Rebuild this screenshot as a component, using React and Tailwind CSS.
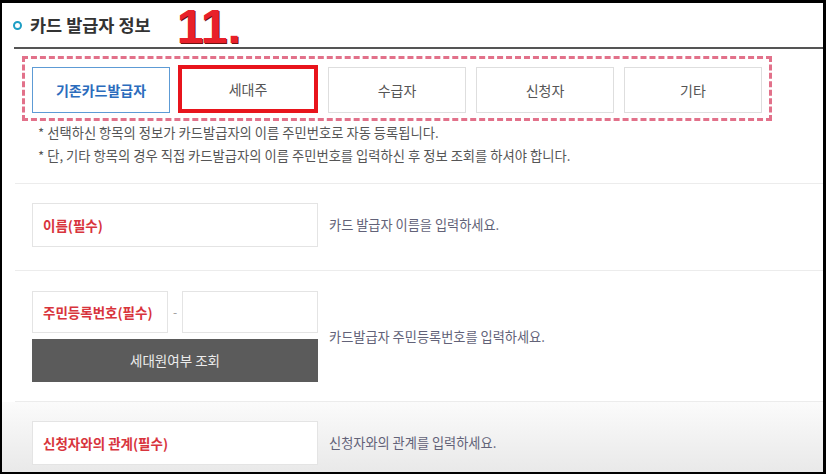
import { useState } from 'react';

const TYPES = ['기존카드발급자', '세대주', '수급자', '신청자', '기타'];

const FONT = "font-['Noto_Sans_CJK_KR','Noto_Sans',sans-serif]";

function TypeButton({ label, index }) {
  if (index === 0) {
    return (
      <div className="w-[138px] h-[46px] mr-[-2px] flex items-center justify-center border border-[#5d9bd5] bg-white text-[14px] font-bold text-[#2b6cbd]">
        {label}
      </div>
    );
  }
  if (index === 1) {
    // highlighted with the thick red frame
    return (
      <div className="w-[140px] h-[48px] -mt-[2px] flex items-center justify-center border-[4px] border-[#e8141c] bg-white text-[14px] text-[#555]">
        {label}
      </div>
    );
  }
  return (
    <div className="w-[138px] h-[46px] flex items-center justify-center border border-[#dedede] bg-white text-[14px] text-[#555]">
      {label}
    </div>
  );
}

function FieldBox({ label, className = 'w-[286px]' }) {
  return (
    <div className={`${className} h-[44px] flex items-center pl-[10px] border border-[#e4e4e4] bg-white`}>
      <span className="text-[13.5px] font-semibold text-[#d8343c]">{label}</span>
    </div>
  );
}

function Hint({ children }) {
  return <p className="ml-[11px] text-[13.2px] text-[#626278]">{children}</p>;
}

export default function App() {
  const [selected] = useState(1);

  return (
    <div className={`w-[826px] h-[474px] bg-black overflow-hidden pt-[3px] pl-[2px] ${FONT}`}>
      <div className="w-[821px] h-[469px] bg-white flex flex-col">
        {/* Header */}
        <div className="h-[44px] shrink-0 flex items-center pl-[11px]">
          <span className="w-[9px] h-[9px] rounded-full border-2 border-[#1d9ec4]" />
          <h2 className="ml-[8px] mt-[1px] text-[17.5px] font-bold text-[#333]">카드 발급자 정보</h2>
          <span className="ml-[26px] self-start -mt-[3px] -mb-[7px] font-['Liberation_Sans',sans-serif] text-[48px] font-bold leading-[54px] text-[#e8202a] [text-shadow:1px_1px_0_#6e1212]">
            11.
          </span>
        </div>
        <div className="ml-[12px] h-[2px] shrink-0 bg-[#555]" />

        {/* Type selector */}
        <div className="mt-[7px] ml-[20px] w-[750px] h-[65px] shrink-0 border-[3px] border-dashed border-[#e2718a] flex items-start pt-[8px] pl-[7px] gap-[10px]">
          {TYPES.map((t, i) => (
            <TypeButton key={t} label={t} index={i} active={i === selected} />
          ))}
        </div>

        <div className="ml-[36px] text-[13.3px] leading-[23px] text-[#555]">
          <p>* 선택하신 항목의 정보가 카드발급자의 이름 주민번호로 자동 등록됩니다.</p>
          <p>* 단, 기타 항목의 경우 직접 카드발급자의 이름 주민번호를 입력하신 후 정보 조회를 하셔야 합니다.</p>
        </div>

        {/* Name */}
        <div className="mt-[16px] ml-[13px] h-px shrink-0 bg-[#ececec]" />
        <div className="pt-[19px] pb-[23px] pl-[30px] flex items-center">
          <FieldBox label="이름(필수)" />
          <Hint>카드 발급자 이름을 입력하세요.</Hint>
        </div>

        {/* Resident number */}
        <div className="ml-[13px] h-px shrink-0 bg-[#ececec]" />
        <div className="pt-[20px] pb-[19px] pl-[30px] flex items-center">
          <div className="w-[286px] flex flex-col gap-[6px]">
            <div className="flex items-center">
              <FieldBox label="주민등록번호(필수)" className="w-[136px] !h-[42px]" />
              <span className="w-[14px] text-center text-[12px] text-[#999]">-</span>
              <div className="w-[136px] h-[42px] border border-[#e4e4e4] bg-white" />
            </div>
            <button className="h-[43px] bg-[#5b5b5b] text-[13.5px] text-[#ececec]">세대원여부 조회</button>
          </div>
          <Hint>카드발급자 주민등록번호를 입력하세요.</Hint>
        </div>

        {/* Relationship */}
        <div className="ml-[13px] h-px shrink-0 bg-[#ececec]" />
        <div className="flex-1 min-h-0 overflow-hidden pt-[19px] pl-[30px] flex items-start bg-gradient-to-b from-[#fbfbfb] to-[#e9e9e9]">
          <div className="flex items-center">
            <FieldBox label="신청자와의 관계(필수)" />
            <Hint>신청자와의 관계를 입력하세요.</Hint>
          </div>
        </div>
      </div>
    </div>
  );
}
